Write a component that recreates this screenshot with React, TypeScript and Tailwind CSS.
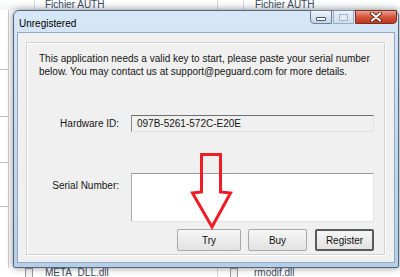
function TitleButtons() {
  return (
    <div className="flex items-start gap-[1px] mr-[1px] -mt-[1px]">
      <div className="w-[22px] h-[14px] rounded-bl-[4px] border border-[#6d7f94] bg-gradient-to-b from-[#eef4fb] to-[#c3d5ea] flex items-end justify-center pb-[2px]">
        <div className="w-[10px] h-[4px] bg-white border border-[#4a5668] rounded-[1px]" />
      </div>
      <div className="w-[21px] h-[14px] border border-[#8d9db0] bg-gradient-to-b from-[#eef4fb] to-[#cddcee] flex items-center justify-center opacity-80">
        <div className="w-[9px] h-[7px] border border-[#9aa7b6] bg-[#e6edf5]" />
      </div>
      <div className="w-[42px] h-[14px] rounded-br-[4px] border border-[#7a2e24] bg-gradient-to-b from-[#e9a08f] via-[#d2533b] to-[#c2361f] flex items-center justify-center">
        <svg width="12" height="10" viewBox="0 0 12 10">
          <path d="M2 1.5 L10 8.5 M10 1.5 L2 8.5" stroke="#5a2418" strokeWidth="4" strokeLinecap="round" />
          <path d="M2 1.5 L10 8.5 M10 1.5 L2 8.5" stroke="#ffffff" strokeWidth="2.2" strokeLinecap="round" />
        </svg>
      </div>
    </div>
  );
}

function Button({ label, primary, w }: { label: string; primary?: boolean; w: string }) {
  return (
    <div
      className={`${w} h-[22px] flex items-center justify-center rounded-[2px] bg-gradient-to-b from-[#f6f6f6] to-[#e2e2e2] text-[10px] text-[#111] ${
        primary ? "border-2 border-[#5a5a5a]" : "border border-[#a8a8a8]"
      }`}
    >
      {label}
    </div>
  );
}

function Arrow() {
  return (
    <svg
      className="absolute left-[188px] top-[150px]"
      width="48"
      height="82"
      viewBox="0 0 48 82"
      fill="none"
    >
      <path
        d="M13.5 4.5 H32.5 V42 L42.5 43 L24 77 L4.5 43 L13.5 42 Z"
        stroke="#ee1c24"
        strokeWidth="3"
        strokeLinejoin="miter"
      />
    </svg>
  );
}

export default function App() {
  return (
    <div className="relative w-[400px] h-[277px] overflow-hidden bg-white font-['Liberation_Sans',Arial,sans-serif] text-[10px]">
      {/* explorer list behind the dialog */}
      <div className="flex flex-col h-full w-full">
        <div className="flex h-[10px] bg-gradient-to-b from-white to-[#f2f5f9] leading-[10px] text-[#3b4b60]">
          <div className="w-[35px] h-full border-r border-[#d6d6d6]" />
          <div className="w-[183px] h-full border-r border-[#d6d6d6] pl-[10px]">Fichier AUTH</div>
          <div className="w-[26px] h-full border-r border-[#d6d6d6]" />
          <div className="flex-1 pl-[11px]">Fichier AUTH</div>
        </div>
        <div className="flex-1 flex">
          <div className="w-[9px] border-r border-[#cfcfcf] flex flex-col">
            <div className="h-[60px] border-b border-[#bdbdbd]" />
            <div className="h-[47px] border-b border-[#bdbdbd]" />
            <div className="h-[46px] border-b border-[#bdbdbd]" />
            <div className="h-[44px] border-b border-[#bdbdbd]" />
          </div>
        </div>
        <div className="h-[9px] flex leading-[10px] text-[#3b4b60]">
          <div className="w-[218px] h-full border-r border-[#d6d6d6] flex pl-[25px] gap-[12px]">
            <div className="w-[8px] h-[10px] border border-[#9a9a9a] bg-[#f4f4f4]" />
            <span>META_DLL.dll</span>
          </div>
          <div className="flex-1 flex pl-[12px] gap-[16px]">
            <div className="w-[8px] h-[10px] border border-[#9a9a9a] bg-[#f4f4f4]" />
            <span>rmodif.dll</span>
          </div>
        </div>
      </div>

      {/* dialog window */}
      <div className="absolute left-[13px] top-[10px] w-[386px] h-[258px] flex flex-col rounded-t-[6px] rounded-b-[2px] border border-[#53657a] bg-gradient-to-b from-[#d6e7f8] via-[#c4daf1] to-[#b6cfe9] shadow-[0_0_7px_rgba(0,0,0,0.45)]">
        <div className="h-[21px] flex items-start justify-between">
          <span className="pl-[5px] pt-[7px] leading-[12px] text-[10px] text-black">Unregistered</span>
          <TitleButtons />
        </div>
        <div className="flex-1 mx-[3px] mb-[4px] border border-[#93a9c1] bg-[#f0f0f0] flex flex-col pt-[9px] pl-[8px] pr-[9px] pb-[7px]">
          <div className="flex-1 flex flex-col border border-[#d3d3d3] shadow-[inset_1px_1px_0_#ffffff,1px_1px_0_#ffffff] pl-[12px] pr-[10px] pt-[9px] pb-[3px] text-[#151515]">
            <p className="leading-[13px]">
              This application needs a valid key to start, please paste your serial number
              <br />
              below. You may contact us at support@peguard.com for more details.
            </p>
            <div className="flex items-center mt-[37px]">
              <div className="w-[80px] text-right">Hardware ID:</div>
              <div className="ml-[12px] flex-1 h-[17px] flex items-center pl-[5px] bg-[#f0f0f0] border border-t-[#6e6e6e] border-l-[#8a8a8a] border-r-[#e2e2e2] border-b-[#e2e2e2]">
                097B-5261-572C-E20E
              </div>
            </div>
            <div className="flex items-start mt-[41px]">
              <div className="w-[80px] text-right pt-[5px]">Serial Number:</div>
              <div className="ml-[12px] flex-1 h-[49px] bg-white border border-t-[#9c9c9c] border-l-[#acacac] border-r-[#e4e4e4] border-b-[#e4e4e4]" />
            </div>
            <div className="flex justify-end mt-[7px]">
              <Button label="Try" w="w-[64px]" />
              <div className="w-[7px]" />
              <Button label="Buy" w="w-[59px]" />
              <div className="w-[8px]" />
              <Button label="Register" w="w-[59px]" primary />
            </div>
          </div>
        </div>
      </div>

      <Arrow />
    </div>
  );
}
